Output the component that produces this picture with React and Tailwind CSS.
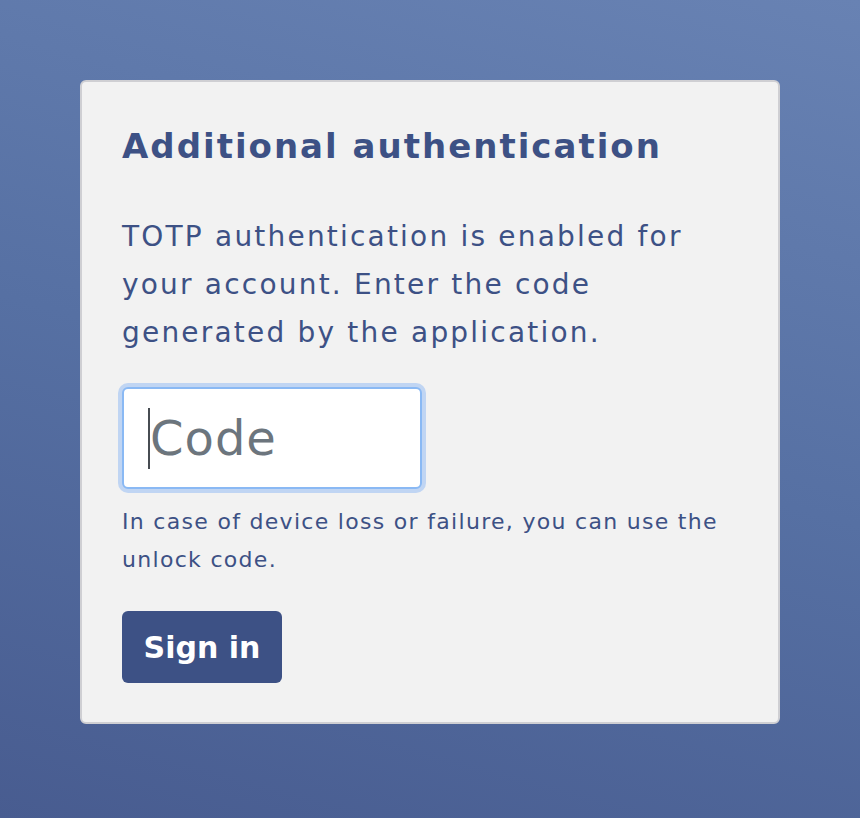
import React from "react";

const FONT = { fontFamily: "'DejaVu Sans', Inter, sans-serif" };

export default function App() {
  return (
    <div
      className="min-h-[818px] w-full bg-[linear-gradient(195deg,#6882b3_0%,#5670a3_50%,#485c90_100%)] pt-[80px] pb-[95px] px-[80px]"
      style={FONT}
    >
      <div className="w-[700px] h-[644px] rounded-[6px] border-2 border-[#cfcfd3] bg-[#f2f2f2] px-[40px] pt-[38px]">
        <h1 className="text-[34px] font-bold leading-[52px] tracking-[2px] text-[#3d5185]">
          Additional authentication
        </h1>
        <p className="mt-[41px] text-[28px] leading-[48px] tracking-[2.2px] text-[#3d5185] max-w-[600px]">
          TOTP authentication is enabled for your account. Enter the code generated by the application.
        </p>
        <div className="relative mt-[30px] w-[300px]">
          <input
            type="text"
            placeholder="Code"
            className="block w-[300px] h-[102px] rounded-[6px] border-2 border-[#8ab9f4] bg-white pl-[26px] pr-[20px] text-[48px] tracking-[1px] text-[#495057] placeholder:text-[#6c757d] outline-none shadow-[0_0_0_4px_#c0d5f3]"
            style={FONT}
          />
          <span className="pointer-events-none absolute left-[26px] top-[21px] h-[61px] w-[2px] bg-[#474c52]" />
        </div>
        <p className="mt-[14px] text-[22px] leading-[38px] tracking-[1.3px] text-[#3d5185] max-w-[615px]">
          In case of device loss or failure, you can use the unlock code.
        </p>
        <button
          className="mt-[32px] h-[72px] w-[160px] rounded-[6px] bg-[#3d5185] text-[30px] font-bold text-white"
          style={FONT}
        >
          Sign in
        </button>
      </div>
    </div>
  );
}
